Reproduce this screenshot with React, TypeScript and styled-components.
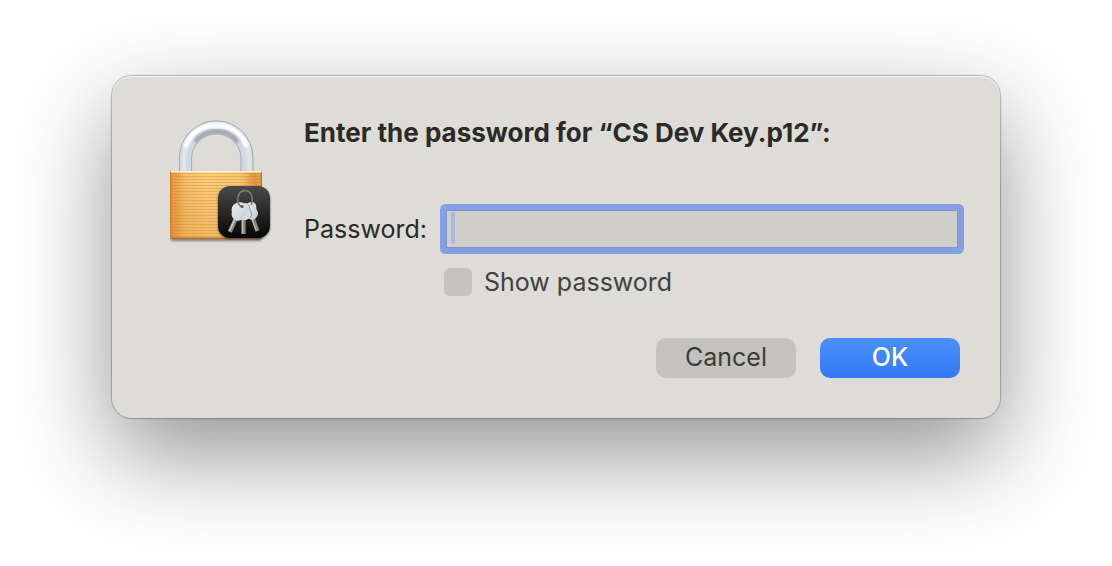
import React from "react";
import styled, { createGlobalStyle } from "styled-components";

const GlobalStyle = createGlobalStyle`
  *, *::before, *::after { box-sizing: border-box; }
  body {
    margin: 0;
    background: #ffffff;
    color: #2b2a26;
    font-family: Inter, "Liberation Sans", sans-serif;
    font-size: 25px;
    line-height: 32px;
  }
`;

const Page = styled.main`
  padding: 76px 112px 0;
  min-height: 100vh;
  overflow: hidden;
`;

const Dialog = styled.form`
  display: flex;
  gap: 24px;
  padding: 40px;
  border-radius: 20px;
  background: #dddcd7;
  box-shadow:
    inset 0 1px 1px rgba(255, 255, 255, 0.8),
    0 0 1px 1px rgba(0, 0, 0, 0.25),
    0 36px 96px rgba(0, 0, 0, 0.43);
`;

const Content = styled.div`
  flex: 1;
  min-width: 0;
`;

const Title = styled.h1`
  margin: 0 0 58px;
  font-size: 26px;
  line-height: 34px;
  font-weight: 700;
`;

const Fields = styled.div`
  display: grid;
  grid-template-columns: 124px 1fr;
  column-gap: 16px;
  row-gap: 18px;
  align-items: center;
`;

const FieldLabel = styled.label`
  white-space: nowrap;
`;

const FieldBox = styled.div`
  position: relative;
`;

const PasswordInput = styled.input`
  display: block;
  width: 100%;
  height: 42px;
  padding: 0 8px;
  border: 2px solid #849fe2;
  border-radius: 2px;
  outline: none;
  background: #d0cec9;
  box-shadow: 0 0 0 4px #849fe2, inset 0 0 0 1px #7c93cf;
  color: inherit;
  font: inherit;
`;

const Caret = styled.span`
  position: absolute;
  top: 4px;
  left: 7px;
  width: 4px;
  height: 32px;
  border-radius: 2px;
  background: #abb9dc;
`;

const CheckRow = styled.label`
  grid-column: 2;
  display: flex;
  align-items: center;
  gap: 12px;
  height: 28px;
  line-height: 34px;
  color: #42413e;
`;

const CheckBox = styled.input`
  appearance: none;
  width: 28px;
  height: 28px;
  margin: 0;
  border-radius: 6px;
  background: #c3c2bd;
`;

const Actions = styled.div`
  display: flex;
  justify-content: flex-end;
  gap: 24px;
  margin-top: 42px;
`;

const Button = styled.button<{ $primary?: boolean }>`
  width: 140px;
  height: 40px;
  padding: 0 0 2px;
  border: 0;
  border-radius: 10px;
  background: ${(p) => (p.$primary ? "linear-gradient(#4a91f8, #3478f6)" : "#c3c2bd")};
  color: ${(p) => (p.$primary ? "#ffffff" : "#3d3c39")};
  font: inherit;
  font-weight: ${(p) => (p.$primary ? 500 : 400)};
`;

const LockIcon = styled.svg`
  flex: none;
  width: 128px;
  height: 128px;
`;

function KeychainLock() {
  return (
    <LockIcon viewBox="0 0 128 128" aria-hidden="true">
      <defs>
        <linearGradient id="brass" x1="0" x2="1" y1="0" y2="0">
          <stop offset="0" stopColor="#c67a26" />
          <stop offset="0.03" stopColor="#e5a049" />
          <stop offset="0.07" stopColor="#e8a44e" />
          <stop offset="0.16" stopColor="#f6bf6c" />
          <stop offset="0.4" stopColor="#fbcf80" />
          <stop offset="0.78" stopColor="#f9c775" />
          <stop offset="0.93" stopColor="#dd963e" />
          <stop offset="0.97" stopColor="#e8a950" />
          <stop offset="1" stopColor="#b86f20" />
        </linearGradient>
        <pattern id="brushed" width="92" height="3" patternUnits="userSpaceOnUse">
          <rect width="92" height="1" fill="#c87418" opacity="0.3" />
        </pattern>
        <linearGradient id="brushFade" x1="0" x2="0" y1="0" y2="1">
          <stop offset="0" stopColor="#d98a2c" stopOpacity="0" />
          <stop offset="1" stopColor="#d98a2c" stopOpacity="0.3" />
        </linearGradient>
        <linearGradient id="tile" x1="0" x2="0" y1="0" y2="1">
          <stop offset="0" stopColor="#4a4a4a" />
          <stop offset="1" stopColor="#050505" />
        </linearGradient>
        <linearGradient id="bow" x1="0" x2="1" y1="0" y2="1">
          <stop offset="0" stopColor="#e4edef" />
          <stop offset="1" stopColor="#c3ced1" />
        </linearGradient>
        <filter id="soft" x="-20%" y="-20%" width="140%" height="140%">
          <feGaussianBlur stdDeviation="1" />
        </filter>
        <filter id="softer" x="-20%" y="-20%" width="140%" height="140%">
          <feGaussianBlur stdDeviation="1.6" />
        </filter>
        <clipPath id="shackle">
          <path d="M27.3 56V41.5a37 37 0 0 1 74 0V56H89V42.5a24.6 24.6 0 0 0-49.2 0V56z" />
        </clipPath>
      </defs>
      <g clipPath="url(#shackle)">
        <rect x="26" y="3" width="77" height="54" fill="#d3d7df" />
        <path d="M32 56V41.500a32.500 32.500 0 0 1 65 0V56" fill="none" stroke="#e4e6ec" strokeWidth="4" filter="url(#soft)" />
        <path d="M33 31a33 33 0 0 1 62 0" fill="none" stroke="#ffffff" strokeWidth="5" filter="url(#soft)" />
        <path d="M43 26a27 27 0 0 1 43 0" fill="none" stroke="#9a9fa8" strokeWidth="4" filter="url(#softer)" />
      </g>
      <path d="M27.5 56V41.5a36.7 36.7 0 0 1 73.5 0V56" fill="none" stroke="#a6abb4" strokeWidth="1" />
      <path d="M39.6 56V42.5a24.7 24.7 0 0 1 49.4 0V56" fill="none" stroke="#a3a9b4" strokeWidth="1" />
      <rect x="19" y="119" width="90" height="6" fill="#000000" opacity="0.4" filter="url(#soft)" />
      <rect x="18" y="55" width="92" height="68" rx="1.5" fill="url(#brass)" />
      <rect x="18" y="57" width="92" height="65" fill="url(#brushed)" />
      <rect x="18" y="57" width="92" height="65" fill="url(#brushFade)" />
      <rect x="19" y="55" width="90" height="1.5" fill="#fff3cf" />
      <rect x="18.5" y="121.5" width="91" height="1.5" rx="0.7" fill="#b4722c" />
      <rect x="66" y="71" width="52" height="52" rx="12" fill="#000000" opacity="0.5" filter="url(#soft)" />
      <rect x="66" y="70" width="52" height="52" rx="12" fill="url(#tile)" />
      <path d="M99.3 98l6.2 17" stroke="#88847d" strokeWidth="4" />
      <path d="M98.6 99l5.600 15.500" stroke="#bdbab4" strokeWidth="1.3" />
      <path d="M94 89c2.500-3.500 7.500-4 9.500-1 1.300 2 .5 3.500 1 5.500 1.500 2 2 4 .8 6.500-1.200 2.500-3.500 4-6 3.500-3 0-4.600-2.500-5.300-6z" fill="url(#bow)" />
      <path d="M91.500 100v18" stroke="#88847d" strokeWidth="4.200" />
      <path d="M90.600 101v16.500" stroke="#c4c1bb" strokeWidth="1.5" />
      <path d="M92 87.500c4.500-1 6 2 5.500 5 .5 2.500 2 4.500.5 8-1.400 3-4 4-7 3.500-2-.4-3-1.500-3.500-3.500z" fill="#d3dcde" />
      <path d="M96.500 88.500c1.500 3 1 5.500 2.500 7.500s.5 4.500-1.500 6.500" fill="none" stroke="#7f8685" strokeWidth="0.800" />
      <path d="M85 100l-7.200 15.800" stroke="#8e8a83" strokeWidth="4.200" />
      <path d="M84.300 100l-6.900 15" stroke="#cac7c1" strokeWidth="1.600" />
      <path d="M82.500 88c3.200-2.200 8-2.200 10.700.2 2.200 2 3 4.300 2.300 7.300-.6 3-2.500 4.500-4 6.500-2.200 2.800-6 3.800-9 1.500-2.800-2-3.300-4.600-2.700-7.500-.7-3 .3-6.200 2.700-8z" fill="url(#bow)" />
      <circle cx="90" cy="90.500" r="1.500" fill="#55524e" />
      <path d="M89 90.500c-5.500-4-4-15.300 3.800-15.800 6.800-.2 8.700 7.300 6.500 14.300" fill="none" stroke="#7b776f" strokeWidth="1.700" />
    </LockIcon>
  );
}

export default function App() {
  return (
    <>
      <GlobalStyle />
      <Page>
        <Dialog
          role="dialog"
          aria-labelledby="dialog-title"
          onSubmit={(event: React.FormEvent) => event.preventDefault()}
        >
          <KeychainLock />
          <Content>
            <Title id="dialog-title">Enter the password for “CS Dev Key.p12”:</Title>
            <Fields>
              <FieldLabel htmlFor="password">Password:</FieldLabel>
              <FieldBox>
                <PasswordInput id="password" type="password" />
                <Caret />
              </FieldBox>
              <CheckRow>
                <CheckBox type="checkbox" />
                Show password
              </CheckRow>
            </Fields>
            <Actions>
              <Button type="button">Cancel</Button>
              <Button type="submit" $primary>
                OK
              </Button>
            </Actions>
          </Content>
        </Dialog>
      </Page>
    </>
  );
}
